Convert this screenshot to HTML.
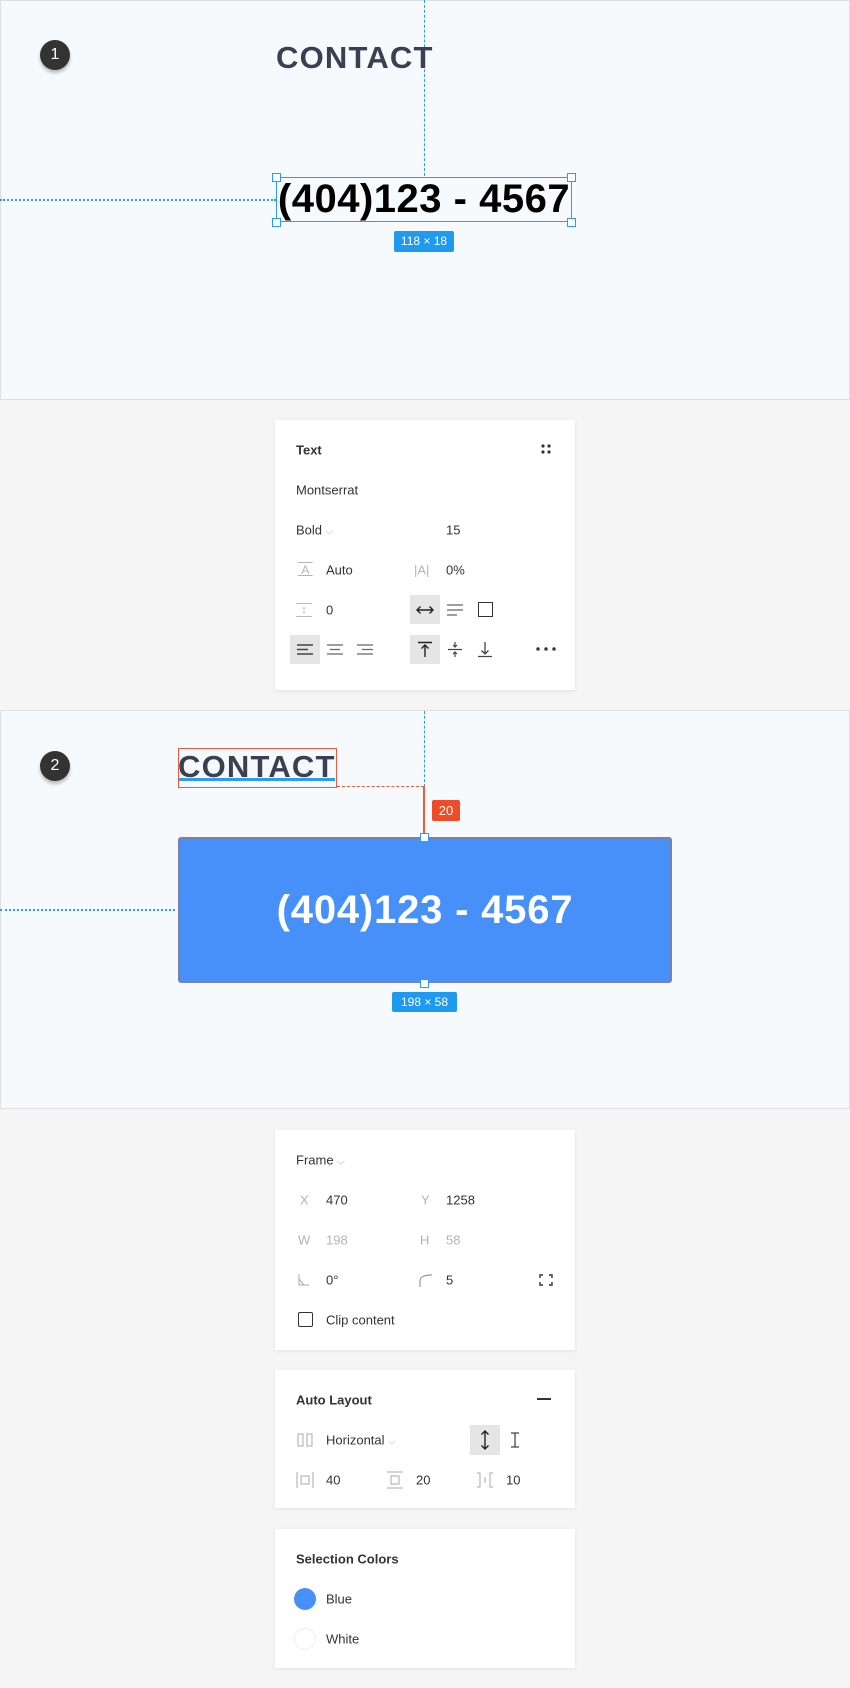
<!DOCTYPE html>
<html><head><meta charset="utf-8"><style>
*{margin:0;padding:0;box-sizing:border-box}
body{width:850px;height:1688px;background:#f5f5f5;position:relative;overflow:hidden;font-family:"Liberation Sans",sans-serif}
.a{position:absolute}
.frame{position:absolute;left:0;width:850px;background:#f7fafd;border:1px solid #dcdfe3}
.badge{position:absolute;width:30px;height:30px;border-radius:50%;background:#333;color:#fff;font-size:16px;text-align:center;line-height:30px;box-shadow:0 3px 3px rgba(0,0,0,.25)}
.h{font-weight:bold;color:#3a3f52;font-size:31px;letter-spacing:1.2px}
.handle{position:absolute;width:9px;height:9px;background:#fff;border:1px solid #2d9cf0}
.lbl{position:absolute;color:#fff;font-size:12px;text-align:center;border-radius:2px}
.panel{position:absolute;left:275px;width:300px;background:#fff;box-shadow:0 1px 4px rgba(0,0,0,.08)}
.t{position:absolute;font-size:13px;color:#333;transform:translateY(-50%);white-space:nowrap}
.g{color:#b3b3b3}
.hl{position:absolute;background:#e5e5e5}
</style></head><body>

<div class="frame" style="top:0;height:400px"></div>
<div class="badge" style="left:40px;top:40px">1</div>
<div class="a" style="left:424px;top:0;height:176px;border-left:1px dashed #2d9cf0"></div>
<div class="a h" style="left:276px;top:40px;line-height:36px">CONTACT</div>
<div class="a" style="left:0;top:199px;width:276px;border-top:2px dotted #2d9cf0"></div>
<div class="a" style="left:276px;top:177px;width:296px;height:45px;border:1.5px solid #2d9cf0"></div>
<div class="a" style="left:270px;top:176px;width:308px;font-weight:bold;font-size:40px;line-height:46px;color:#000;text-align:center;letter-spacing:0.5px">(404)123 - 4567</div>
<div class="handle" style="left:272px;top:173px"></div>
<div class="handle" style="left:567px;top:173px"></div>
<div class="handle" style="left:272px;top:218px"></div>
<div class="handle" style="left:567px;top:218px"></div>
<div class="lbl" style="left:394px;top:231px;width:60px;height:21px;line-height:21px;background:#1e9bf0">118 × 18</div>

<div class="panel" style="top:420px;height:270px"></div>
<div class="t" style="left:296px;top:450px;font-weight:bold;color:#333">Text</div>
<svg class="a" style="left:540px;top:443px" width="12" height="12"><circle cx="3" cy="3" r="1.6" fill="#333"/><circle cx="9" cy="3" r="1.6" fill="#333"/><circle cx="3" cy="9" r="1.6" fill="#333"/><circle cx="9" cy="9" r="1.6" fill="#333"/></svg>
<div class="t" style="left:296px;top:490px">Montserrat</div>
<div class="t" style="left:296px;top:530px">Bold <span class="g" style="font-size:10px">⌵</span></div>
<div class="t" style="left:446px;top:530px">15</div>
<div class="t g" style="left:298px;top:570px;font-size:12px;text-decoration:overline underline">&nbsp;A&nbsp;</div>
<div class="t" style="left:326px;top:570px">Auto</div>
<div class="t g" style="left:414px;top:570px">|A|</div>
<div class="t" style="left:446px;top:570px">0%</div>
<div class="t g" style="left:296px;top:610px;font-size:11px;border-top:1px solid #bbb;border-bottom:1px solid #bbb;width:16px;text-align:center">↕</div>
<div class="t" style="left:326px;top:610px">0</div>
<div class="hl" style="left:410px;top:595px;width:30px;height:29px"></div>
<svg class="a" style="left:416px;top:604px" width="18" height="12"><path d="M1 6H17M4.5 2.5L1 6L4.5 9.5M13.5 2.5L17 6L13.5 9.5" stroke="#222" stroke-width="1.4" fill="none"/></svg>
<svg class="a" style="left:446px;top:603px" width="18" height="14"><path d="M1 2H17M1 7H17M1 12H11" stroke="#666" stroke-width="1.3"/></svg>
<div class="a" style="left:478px;top:602px;width:15px;height:15px;border:1.5px solid #333"></div>
<div class="hl" style="left:290px;top:635px;width:30px;height:29px"></div>
<svg class="a" style="left:296px;top:643px" width="18" height="13"><path d="M1 2H17M1 6.5H12M1 11H17" stroke="#444" stroke-width="1.5"/></svg>
<svg class="a" style="left:326px;top:643px" width="18" height="13"><path d="M1 2H17M4 6.5H14M1 11H17" stroke="#666" stroke-width="1.3"/></svg>
<svg class="a" style="left:356px;top:643px" width="18" height="13"><path d="M1 2H17M6 6.5H17M1 11H17" stroke="#666" stroke-width="1.3"/></svg>
<div class="hl" style="left:410px;top:635px;width:30px;height:29px"></div>
<svg class="a" style="left:416px;top:641px" width="18" height="17"><path d="M2 1.5H16M9 4V16M5.5 7.5L9 4L12.5 7.5" stroke="#222" stroke-width="1.4" fill="none"/></svg>
<svg class="a" style="left:446px;top:641px" width="18" height="17"><path d="M2 8.5H16M9 1V6M7 4L9 6L11 4M9 16V11M7 13L9 11L11 13" stroke="#444" stroke-width="1.2" fill="none"/></svg>
<svg class="a" style="left:476px;top:641px" width="18" height="17"><path d="M2 15.5H16M9 1V13M5.5 9.5L9 13L12.5 9.5" stroke="#444" stroke-width="1.3" fill="none"/></svg>
<svg class="a" style="left:535px;top:646px" width="22" height="6"><circle cx="3" cy="3" r="1.7" fill="#333"/><circle cx="11" cy="3" r="1.7" fill="#333"/><circle cx="19" cy="3" r="1.7" fill="#333"/></svg>

<div class="frame" style="top:710px;height:399px"></div>
<div class="badge" style="left:40px;top:751px">2</div>
<div class="a" style="left:424px;top:711px;height:76px;border-left:1px dashed #2d9cf0"></div>
<div class="a h" style="left:178px;top:750px;width:165px;line-height:34px">CONTACT</div>
<div class="a" style="left:178px;top:778px;width:157px;height:3px;background:#2d9cf0"></div>
<div class="a" style="left:178px;top:748px;width:159px;height:40px;border:1.5px solid #ef5a3c"></div>
<div class="a" style="left:337px;top:786px;width:87px;border-top:1.5px dashed #ef5a3c"></div>
<div class="a" style="left:423px;top:786px;width:1.5px;height:51px;background:#ef5a3c"></div>
<div class="lbl" style="left:432px;top:800px;width:28px;height:21px;line-height:21px;background:#ef4b26;font-size:13px">20</div>
<div class="a" style="left:0;top:909px;width:175px;border-top:2px dotted #2d9cf0"></div>
<div class="a" style="left:178px;top:837px;width:494px;height:146px;background:#4790fa;border:2px solid #7a80ae;border-radius:3px;color:#fff;font-weight:bold;font-size:40px;text-align:center;line-height:142px;letter-spacing:0.8px">(404)123 - 4567</div>
<div class="handle" style="left:420px;top:833px"></div>
<div class="handle" style="left:420px;top:979px"></div>
<div class="lbl" style="left:392px;top:992px;width:65px;height:20px;line-height:20px;background:#1e9bf0">198 × 58</div>

<div class="panel" style="top:1130px;height:220px"></div>
<div class="t" style="left:296px;top:1160px">Frame <span class="g" style="font-size:10px">⌵</span></div>
<div class="t g" style="left:300px;top:1200px">X</div>
<div class="t" style="left:326px;top:1200px">470</div>
<div class="t g" style="left:421px;top:1200px">Y</div>
<div class="t" style="left:446px;top:1200px">1258</div>
<div class="t g" style="left:298px;top:1240px">W</div>
<div class="t g" style="left:326px;top:1240px">198</div>
<div class="t g" style="left:420px;top:1240px">H</div>
<div class="t g" style="left:446px;top:1240px">58</div>
<svg class="a" style="left:298px;top:1274px" width="12" height="12"><path d="M1 0V11H11M1 5L6 11" stroke="#aaa" stroke-width="1" fill="none"/></svg>
<div class="t" style="left:326px;top:1280px">0°</div>
<svg class="a" style="left:419px;top:1274px" width="14" height="13"><path d="M1 13V7Q1 1 13 1" stroke="#999" stroke-width="1.2" fill="none"/></svg>
<div class="t" style="left:446px;top:1280px">5</div>
<svg class="a" style="left:539px;top:1274px" width="14" height="12"><path d="M1 4V1H4M10 1H13V4M13 8V11H10M4 11H1V8" stroke="#333" stroke-width="1.4" fill="none"/></svg>
<div class="a" style="left:298px;top:1312px;width:15px;height:15px;border:1.5px solid #333;border-radius:2px"></div>
<div class="t" style="left:326px;top:1320px">Clip content</div>

<div class="panel" style="top:1370px;height:138px"></div>
<div class="t" style="left:296px;top:1400px;font-weight:bold;color:#333">Auto Layout</div>
<div class="a" style="left:537px;top:1398px;width:14px;height:1.5px;background:#333"></div>
<svg class="a" style="left:297px;top:1433px" width="16" height="14"><rect x="1" y="1" width="5" height="12" stroke="#aaa" fill="none"/><rect x="10" y="1" width="5" height="12" stroke="#aaa" fill="none"/></svg>
<div class="t" style="left:326px;top:1440px">Horizontal <span class="g" style="font-size:10px">⌵</span></div>
<div class="hl" style="left:470px;top:1425px;width:30px;height:30px"></div>
<svg class="a" style="left:479px;top:1430px" width="12" height="20"><path d="M6 1V19M2.5 4.5L6 1L9.5 4.5M2.5 15.5L6 19L9.5 15.5" stroke="#222" stroke-width="1.4" fill="none"/></svg>
<svg class="a" style="left:510px;top:1432px" width="10" height="16"><path d="M1 1H9M5 1V15M1 15H9" stroke="#444" stroke-width="1.3" fill="none"/></svg>
<svg class="a" style="left:296px;top:1471px" width="18" height="18"><path d="M1 1V17M17 1V17" stroke="#aaa"/><rect x="5" y="5" width="8" height="8" stroke="#aaa" fill="none"/></svg>
<div class="t" style="left:326px;top:1480px">40</div>
<svg class="a" style="left:386px;top:1471px" width="18" height="18"><path d="M1 1H17M1 17H17" stroke="#aaa"/><rect x="5" y="5" width="8" height="8" stroke="#aaa" fill="none"/></svg>
<div class="t" style="left:416px;top:1480px">20</div>
<svg class="a" style="left:476px;top:1472px" width="18" height="16"><path d="M1 1H4V15H1M17 1H14V15H17M9 5V11" stroke="#aaa" fill="none"/></svg>
<div class="t" style="left:506px;top:1480px">10</div>

<div class="panel" style="top:1529px;height:139px"></div>
<div class="t" style="left:296px;top:1559px;font-weight:bold;color:#333">Selection Colors</div>
<div class="a" style="left:294px;top:1588px;width:22px;height:22px;border-radius:50%;background:#4790fa"></div>
<div class="t" style="left:326px;top:1599px">Blue</div>
<div class="a" style="left:294px;top:1628px;width:22px;height:22px;border-radius:50%;background:#fff;border:1px solid #eee"></div>
<div class="t" style="left:326px;top:1639px">White</div>

</body></html>
